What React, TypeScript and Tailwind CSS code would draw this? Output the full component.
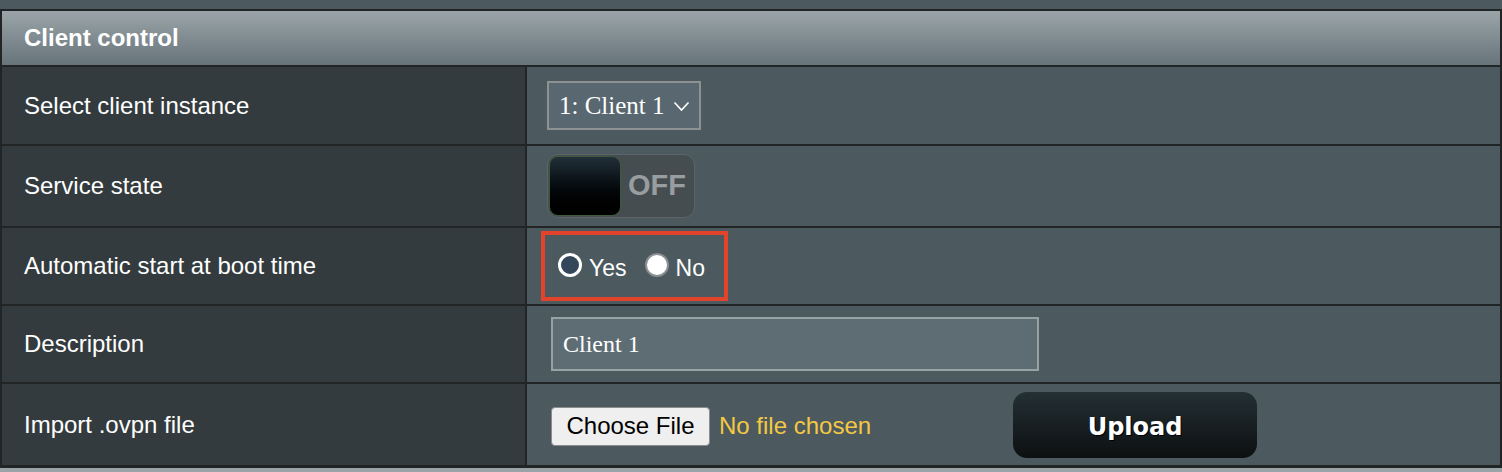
import React from 'react';

const sans = { fontFamily: '"Liberation Sans", Arial, sans-serif' };
const serif = { fontFamily: '"Liberation Serif", "Times New Roman", serif' };

function Row({ label, height, children }: { label: string; height: string; children: React.ReactNode }) {
  return (
    <div className={`flex border-b-2 border-[#222526] ${height}`}>
      <div className="w-[525px] shrink-0 flex items-center pl-[22px] bg-[#333b3e] border-r-2 border-[#222526] text-[24px] text-white" style={sans}>
        {label}
      </div>
      <div className="flex-1 flex items-center bg-[#4c5a60]">{children}</div>
    </div>
  );
}

function Radio({ checked, label }: { checked: boolean; label: string }) {
  return (
    <label className="flex items-center gap-[7px] text-[23px] text-white" style={sans}>
      <span
        className={
          checked
            ? 'w-[24px] h-[24px] rounded-full bg-[#34465a] border-[3px] border-white -mt-[3px]'
            : 'w-[24px] h-[24px] rounded-full bg-white border-[2px] border-[#8a8f92] -mt-[3px]'
        }
      />
      <span className="mt-[4px]">{label}</span>
    </label>
  );
}

export default function App() {
  return (
    <div className="w-[1502px] h-[472px] bg-[#4c5a60] pt-[9px] overflow-hidden">
      <div className="border-x-2 border-t-2 border-[#222526]">
        <div className="h-[56px] border-b-2 border-[#222526] bg-gradient-to-b from-[#9ba5a9] to-[#67747a] flex items-center pl-[22px]">
          <span className="text-[24px] font-bold text-white" style={sans}>Client control</span>
        </div>

        <Row label="Select client instance" height="h-[79px]">
          <div className="ml-[20px] w-[154px] h-[49px] border-2 border-[#8d9192] bg-[#596870] flex items-center pl-[10px] text-white">
            <span className="text-[25px]" style={serif}>1: Client 1</span>
            <svg className="ml-[8px] mt-[2px]" width="17" height="11" viewBox="0 0 17 11" fill="none">
              <path d="M1.5 1.5 L8.5 9 L15.5 1.5" stroke="white" strokeWidth="1.6" />
            </svg>
          </div>
        </Row>

        <Row label="Service state" height="h-[82px]">
          <div className="ml-[20px] w-[148px] h-[64px] rounded-[11px] bg-[#454d50] border border-[#5b6468] flex items-center p-[1px]">
            <div className="w-[72px] h-[60px] rounded-[9px] bg-gradient-to-b from-[#22303a] to-[#000000] border border-[#3f5a3a]" />
            <span className="flex-1 text-center text-[29px] font-bold text-[#979da0]" style={sans}>OFF</span>
          </div>
        </Row>

        <Row label="Automatic start at boot time" height="h-[78px]">
          <div className="ml-[14px] w-[187px] h-[70px] border-[4px] border-[#e2432b] flex items-center pl-[13px] gap-[18px]">
            <Radio checked label="Yes" />
            <Radio checked={false} label="No" />
          </div>
        </Row>

        <Row label="Description" height="h-[78px]">
          <div className="ml-[24px] w-[488px] h-[54px] border-2 border-[#97a2a5] bg-[#5e6d73] flex items-center pl-[10px]">
            <span className="text-[24px] text-white" style={serif}>Client 1</span>
          </div>
        </Row>

        <div className="flex border-b-[3px] border-[#222526] h-[84px]">
          <div className="w-[525px] shrink-0 flex items-center pl-[22px] bg-[#333b3e] border-r-2 border-[#222526] text-[24px] text-white" style={sans}>
            Import .ovpn file
          </div>
          <div className="flex-1 flex items-center bg-[#4c5a60]">
            <button className="ml-[24px] mt-[3px] w-[159px] h-[39px] rounded-[4px] bg-[#efefef] border border-[#8c8c8c] text-[24px] text-black" style={sans}>
              Choose File
            </button>
            <span className="ml-[9px] mt-[3px] text-[24px] text-[#f5c842]" style={sans}>No file chosen</span>
            <button
              className="ml-[142px] w-[244px] h-[66px] pt-[4px] rounded-[14px] bg-gradient-to-b from-[#243035] to-[#0d1011] text-white text-[24px] font-bold [text-shadow:1px_1px_0_#000]"
              style={{ fontFamily: '"DejaVu Sans", Verdana, sans-serif' }}
            >
              Upload
            </button>
          </div>
        </div>
      </div>
      <div className="h-[6px] bg-[#9aa4a8]" />
    </div>
  );
}
